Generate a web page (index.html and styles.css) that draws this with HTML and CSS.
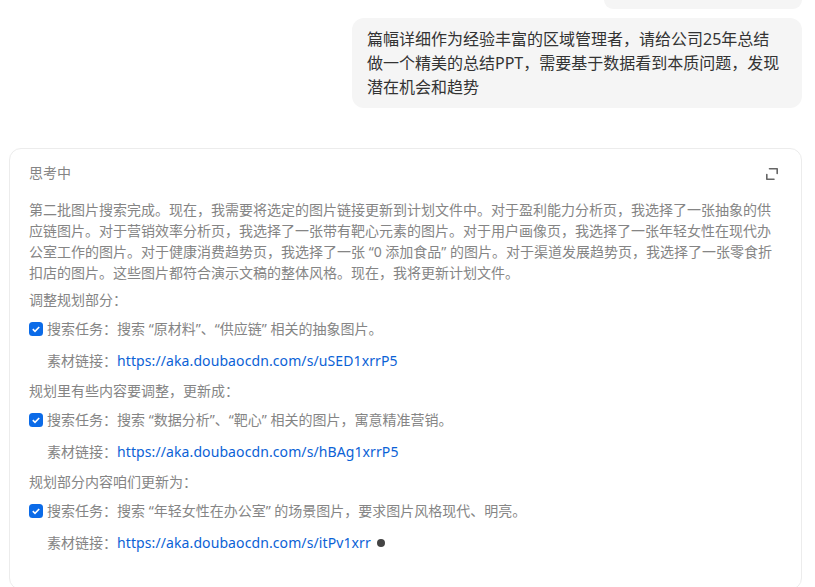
FILE: index.html
```html
<!DOCTYPE html>
<html lang="zh">
<head>
<meta charset="utf-8">
<title>思考中</title>
<link rel="stylesheet" href="styles.css">
</head>
<body>
<div class="chat">
  <div class="prev-bubble"></div>
  <div class="bubble">篇幅详细作为经验丰富的区域管理者，请给公司25年总结做一个精美的总结PPT，需要基于数据看到本质问题，发现潜在机会和趋势</div>
  <section class="card">
    <header class="card-head">
      <span>思考中</span>
      <svg class="expand" width="14" height="14" viewBox="0 0 14 14" fill="none" stroke="#666" stroke-width="1.6" stroke-linecap="round" stroke-linejoin="round"><path d="M4.5 1.8H12.2V6.4"/><path d="M1.8 7.6V12.2H9"/></svg>
    </header>
    <p class="para">第二批图片搜索完成。现在，我需要将选定的图片链接更新到计划文件中。对于盈利能力分析页，我选择了一张抽象的供应链图片。对于营销效率分析页，我选择了一张带有靶心元素的图片。对于用户画像页，我选择了一张年轻女性在现代办公室工作的图片。对于健康消费趋势页，我选择了一张 “0 添加食品” 的图片。对于渠道发展趋势页，我选择了一张零食折扣店的图片。这些图片都符合演示文稿的整体风格。现在，我将更新计划文件。</p>
    <p class="note">调整规划部分：</p>
    <div class="task"><svg class="check" width="14" height="14" viewBox="0 0 14 14"><rect width="14" height="14" rx="3.5" fill="#0b6be8"/><path d="M3.8 7.2 6 9.3 10.2 5" fill="none" stroke="#fff" stroke-width="1.6"/></svg><span>搜索任务：搜索 “原材料”、“供应链” 相关的抽象图片。</span></div>
    <div class="link-row">素材链接：<a href="#">https://aka.doubaocdn.com/s/uSED1xrrP5</a></div>
    <p class="note">规划里有些内容要调整，更新成：</p>
    <div class="task"><svg class="check" width="14" height="14" viewBox="0 0 14 14"><rect width="14" height="14" rx="3.5" fill="#0b6be8"/><path d="M3.8 7.2 6 9.3 10.2 5" fill="none" stroke="#fff" stroke-width="1.6"/></svg><span>搜索任务：搜索 “数据分析”、“靶心” 相关的图片，寓意精准营销。</span></div>
    <div class="link-row">素材链接：<a href="#">https://aka.doubaocdn.com/s/hBAg1xrrP5</a></div>
    <p class="note">规划部分内容咱们更新为：</p>
    <div class="task"><svg class="check" width="14" height="14" viewBox="0 0 14 14"><rect width="14" height="14" rx="3.5" fill="#0b6be8"/><path d="M3.8 7.2 6 9.3 10.2 5" fill="none" stroke="#fff" stroke-width="1.6"/></svg><span>搜索任务：搜索 “年轻女性在办公室” 的场景图片，要求图片风格现代、明亮。</span></div>
    <div class="link-row">素材链接：<a href="#">https://aka.doubaocdn.com/s/itPv1xrr</a><i class="cursor"></i></div>
  </section>
</div>
</body>
</html>
```
FILE: styles.css
```css
* { box-sizing: border-box; }
html, body { margin: 0; padding: 0; height: 100%; overflow: hidden; background: #fff; }
body { font-family: "Noto Sans", "Noto Sans CJK SC", sans-serif; }
.chat { display: flex; flex-direction: column; align-items: flex-end; padding: 0 13px 0 9px; }
.prev-bubble { width: 198px; height: 9px; background: #f5f5f5; border-radius: 0 0 12px 12px; }
.bubble {
  width: 450px; height: 90px; margin-top: 9px; padding: 9px 19px 9px 15px;
  background: #f5f5f5; border-radius: 12px;
  font-size: 16px; line-height: 24px; color: #333;
}
.card {
  width: 100%; height: 442px; margin-top: 40px; padding: 13px 19px 0;
  border: 1px solid #ececec; border-radius: 12px;
  font-size: 14px; line-height: 21px; color: #858585;
}
.card-head { display: flex; justify-content: space-between; align-items: flex-start; height: 22px; margin-bottom: 15px; }
.expand { margin: 5px 3px 0 0; }
.para { margin: 0; width: 752px; line-height: 21px; }
.note { margin: 6px 0 0; line-height: 21px; }
.link-row + .note { margin-top: 9px; }
.task { display: flex; align-items: center; gap: 4px; margin-top: 8px; height: 21px; }
.check { flex: none; }
.link-row { display: flex; align-items: center; margin-top: 11px; padding-left: 18px; height: 21px; }
.link-row a { color: #0b62d6; text-decoration: none; letter-spacing: 0.1px; }
.cursor { width: 8px; height: 8px; margin-left: 6px; border-radius: 50%; background: #444; }
```
